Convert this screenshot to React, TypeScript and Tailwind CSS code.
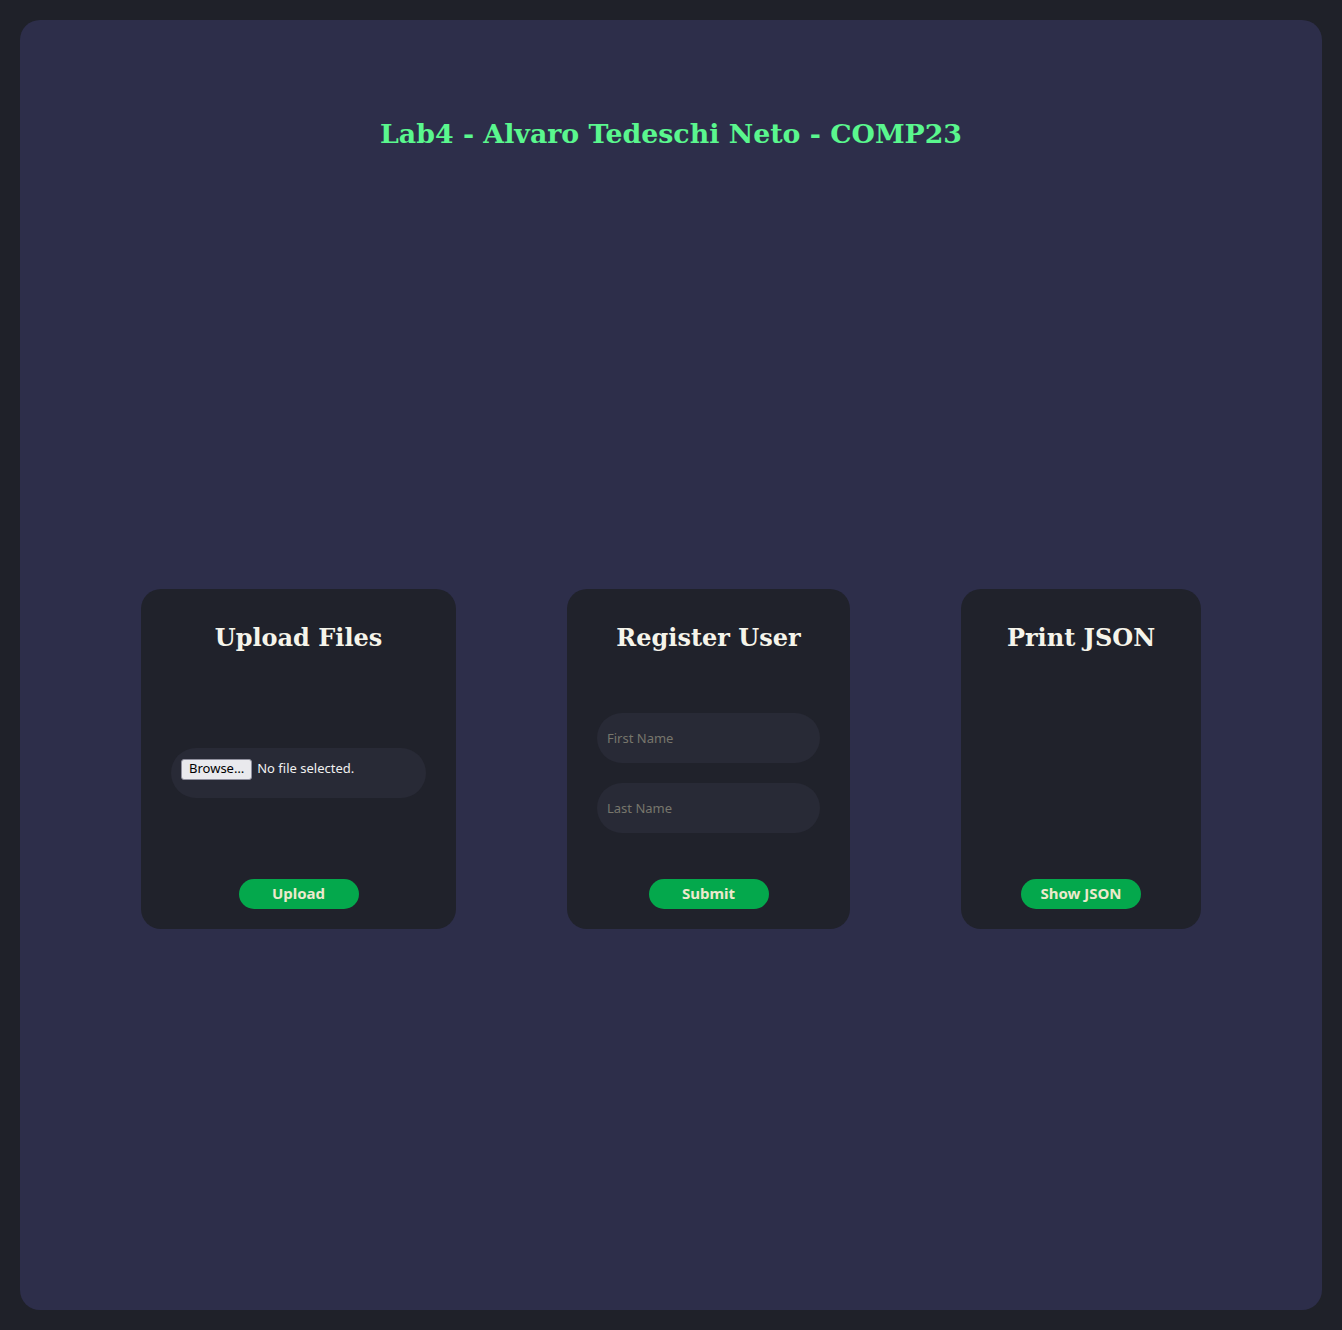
import React from "react";

const serif = { fontFamily: '"DejaVu Serif", serif' };

function Btn({ label }: { label: string }) {
  return (
    <button className="mx-auto w-[120px] h-[30px] pb-[2px] rounded-full bg-[#04a84c] text-[#ece9cc] text-[15px] font-bold leading-none">
      {label}
    </button>
  );
}

function Card({ w, title, children, btn }: { w: string; title: string; children?: React.ReactNode; btn: string }) {
  return (
    <div className={`${w} h-[340px] rounded-[20px] bg-[#20222b] px-[30px] pt-[31px] pb-[20px] flex flex-col`}>
      <h2 style={serif} className="h-[36px] leading-[36px] text-[24px] font-bold text-[#f5f4ea] text-center mb-[11px]">
        {title}
      </h2>
      <div className="h-[212px] flex flex-col justify-center gap-[20px]">{children}</div>
      <Btn label={btn} />
    </div>
  );
}

export default function App() {
  return (
    <div
      className="min-h-[1330px] bg-[#1f2129] p-[20px]"
      style={{ fontFamily: '"Noto Sans", "Open Sans", sans-serif' }}
    >
      <div className="h-[1290px] rounded-[20px] bg-[#2d2e4a] pt-[96px] flex flex-col">
        <h1 style={serif} className="h-[36px] leading-[36px] text-[26.8px] font-bold text-[#5af78e] text-center">
          Lab4 - Alvaro Tedeschi Neto - COMP23
        </h1>
        <div className="mt-[437px] flex justify-center gap-[111px]">
          <Card w="w-[315px]" title="Upload Files" btn="Upload">
            <div className="h-[50px] rounded-full bg-[#282a36] flex items-center px-[10px] pb-[8px] gap-[5px]">
              <span className="h-[21px] px-[7px] flex items-center rounded-[3px] border border-[#8f8f9d] bg-[#e9e9ed] text-black text-[13px]">
                Browse…
              </span>
              <span className="text-[13px] text-[#f0f0f0]">No file selected.</span>
            </div>
          </Card>
          <Card w="w-[283px]" title="Register User" btn="Submit">
            <input
              placeholder="First Name"
              className="h-[50px] w-full rounded-full bg-[#282a36] px-[10px] text-[13px] text-white placeholder:text-[#77766c] outline-none"
            />
            <input
              placeholder="Last Name"
              className="h-[50px] w-full rounded-full bg-[#282a36] px-[10px] text-[13px] text-white placeholder:text-[#77766c] outline-none"
            />
          </Card>
          <Card w="w-[240px]" title="Print JSON" btn="Show JSON" />
        </div>
      </div>
    </div>
  );
}
